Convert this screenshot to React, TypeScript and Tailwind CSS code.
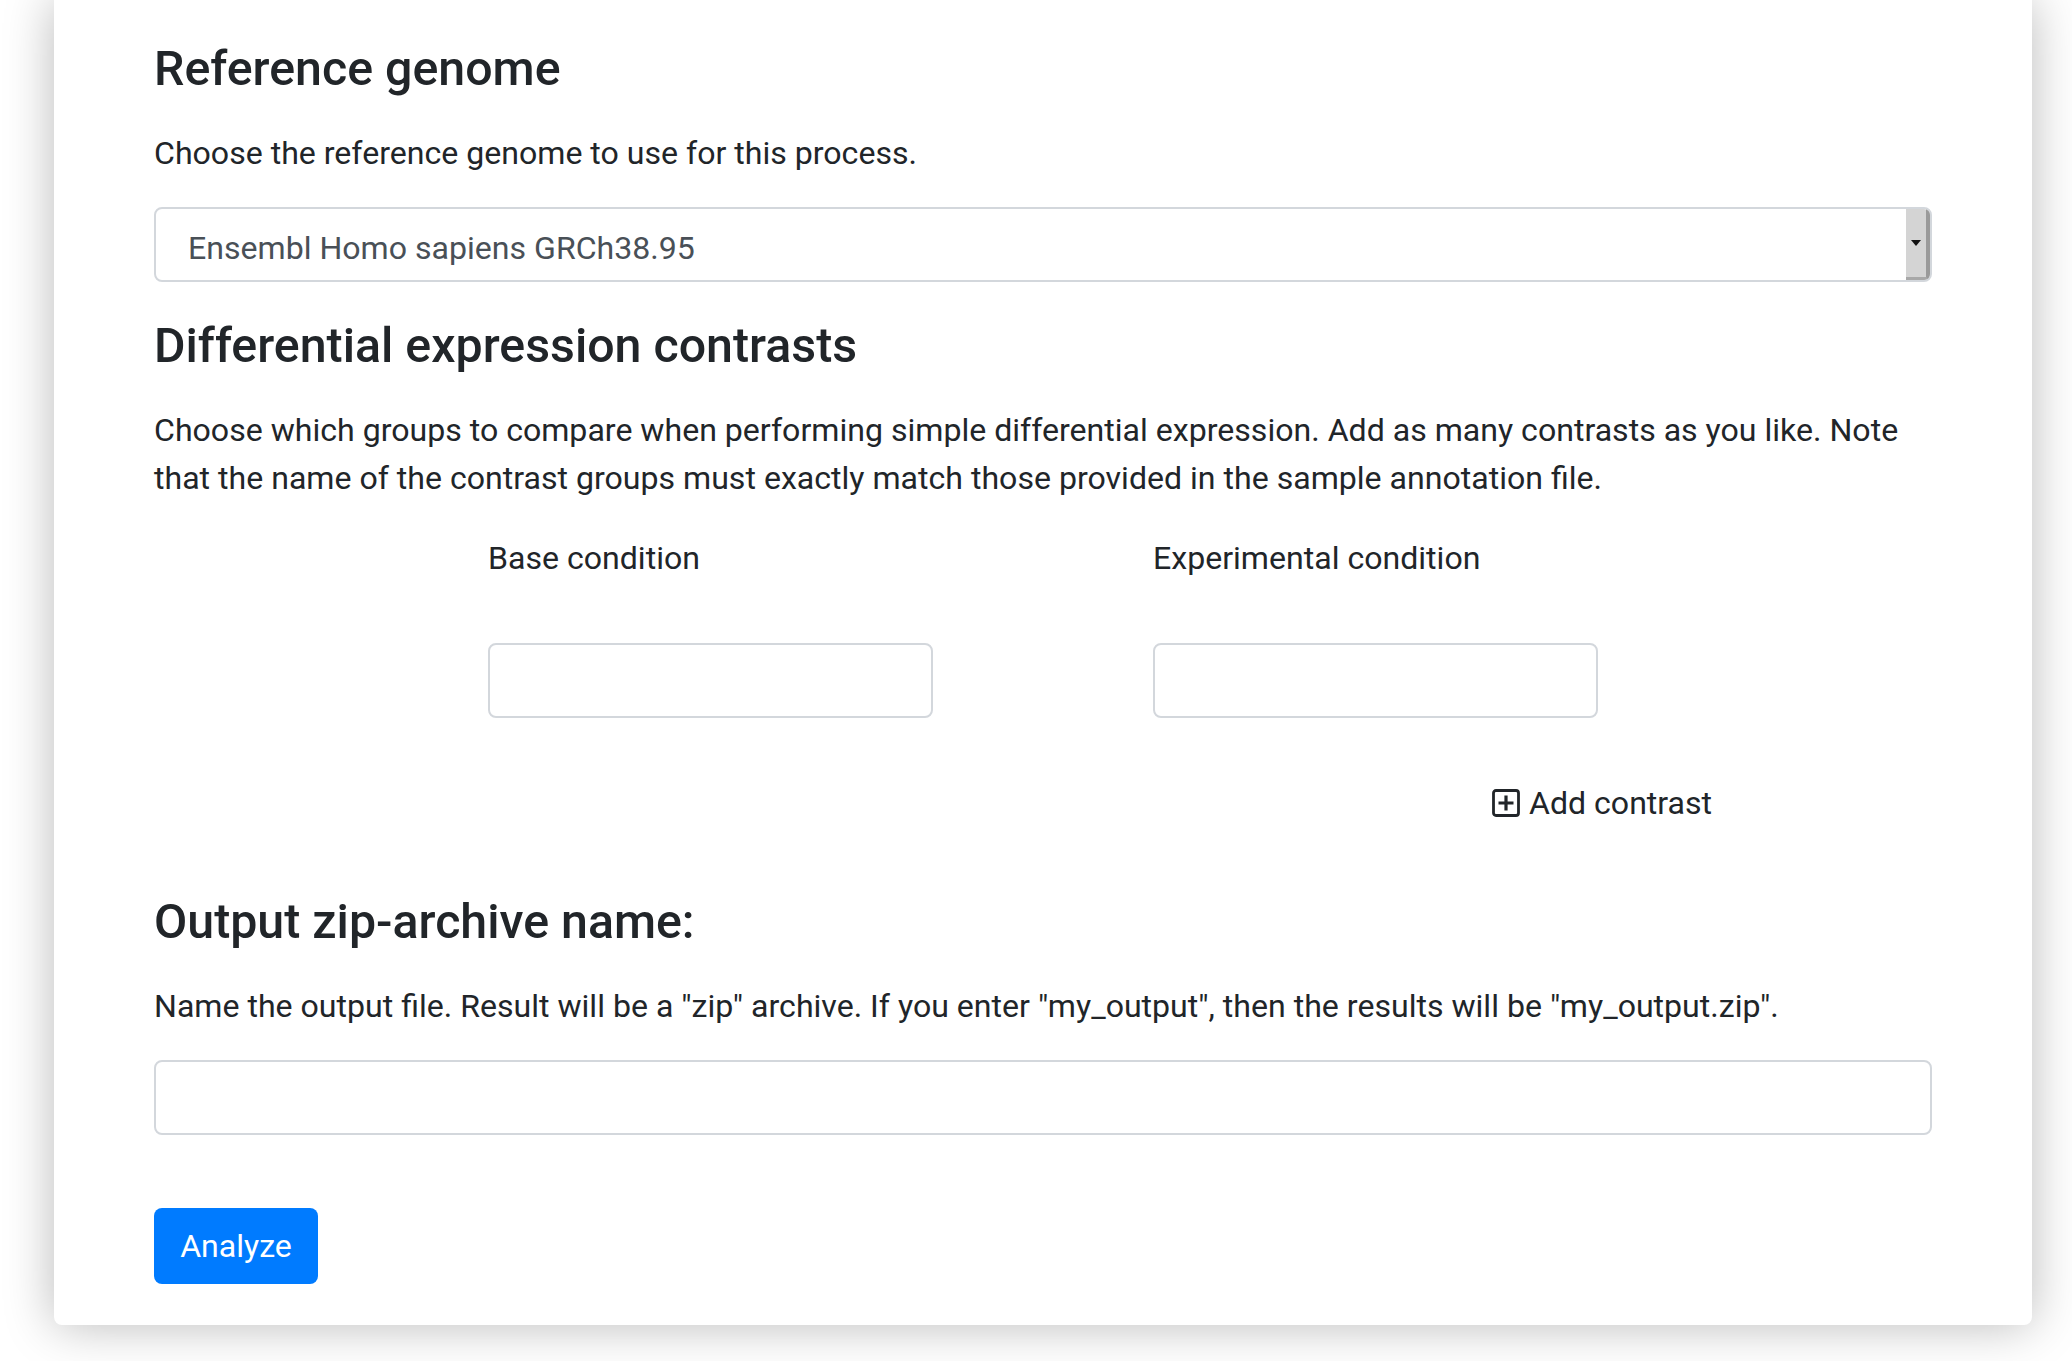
import React from "react";

function SelectArrow() {
  return (
    <div className="absolute right-0 top-0 bottom-0 w-[24px] bg-[#d4d4d4] border-r-[4px] border-b-[3px] border-r-[#9a9a9a] border-b-[#a8a8a8] flex items-center justify-center">
      <svg width="10" height="6" viewBox="0 0 10 6">
        <path d="M0 0h10L5 6z" fill="#111" />
      </svg>
    </div>
  );
}

function PlusSquare() {
  return (
    <svg width="28" height="28" viewBox="0 0 28 28" className="shrink-0">
      <rect x="1.5" y="1.5" width="25" height="25" rx="2.5" fill="none" stroke="#212529" strokeWidth="2.8" />
      <path d="M14 6.5v15M6.5 14h15" stroke="#212529" strokeWidth="3.2" />
    </svg>
  );
}

export default function App() {
  return (
    <div
      className="min-h-[1361px] bg-white overflow-hidden text-[#212529]"
      style={{ fontFamily: "Roboto, 'Liberation Sans', sans-serif" }}
    >
      <div className="ml-[54px] w-[1978px] bg-white rounded-b-[8px] shadow-[0_0_50px_rgba(0,0,0,0.28)] px-[100px] pt-[40px] pb-[41px]">
        <h2 className="text-[48.3px] leading-[57.6px] font-medium">Reference genome</h2>
        <p className="mt-[31px] text-[32.1px] leading-[48px]">Choose the reference genome to use for this process.</p>
        <div className="mt-[30px] relative h-[75px] rounded-[8px] border-2 border-[#d3d7dc] overflow-hidden flex items-center pl-[32px] pt-[7px] text-[32.1px] text-[#495057]">
          Ensembl Homo sapiens GRCh38.95
          <SelectArrow />
        </div>

        <h2 className="mt-[35px] text-[48.3px] leading-[57.6px] font-medium">Differential expression contrasts</h2>
        <p className="mt-[32px] text-[32.1px] leading-[48px]">
          Choose which groups to compare when performing simple differential expression. Add as many contrasts as you like. Note that the name of the contrast groups must exactly match those provided in the sample annotation file.
        </p>

        <div className="mt-[32px] flex justify-center gap-[220px]">
          <div className="w-[445px] flex flex-col">
            <label className="text-[32.1px] leading-[48px]">Base condition</label>
            <input className="mt-[61px] h-[75px] rounded-[8px] border-2 border-[#d3d7dc] outline-none" />
          </div>
          <div className="w-[445px] flex flex-col">
            <label className="text-[32.1px] leading-[48px]">Experimental condition</label>
            <input className="mt-[61px] h-[75px] rounded-[8px] border-2 border-[#d3d7dc] outline-none" />
          </div>
        </div>

        <div className="mt-[61px] pl-[1338px] flex items-center gap-[9px] text-[32.1px] leading-[48px]">
          <PlusSquare />
          <span>Add contrast</span>
        </div>

        <h2 className="mt-[66px] text-[48.3px] leading-[57.6px] font-medium">Output zip-archive name:</h2>
        <p className="mt-[31px] text-[32.1px] leading-[48px]">
          Name the output file. Result will be a "zip" archive. If you enter "my_output", then the results will be "my_output.zip".
        </p>
        <input className="mt-[30px] block w-full h-[75px] rounded-[8px] border-2 border-[#d3d7dc] outline-none" />

        <button className="mt-[73px] w-[164px] h-[76px] rounded-[8px] bg-[#007bff] text-white text-[32.1px] flex items-center justify-center">
          Analyze
        </button>
      </div>
    </div>
  );
}
